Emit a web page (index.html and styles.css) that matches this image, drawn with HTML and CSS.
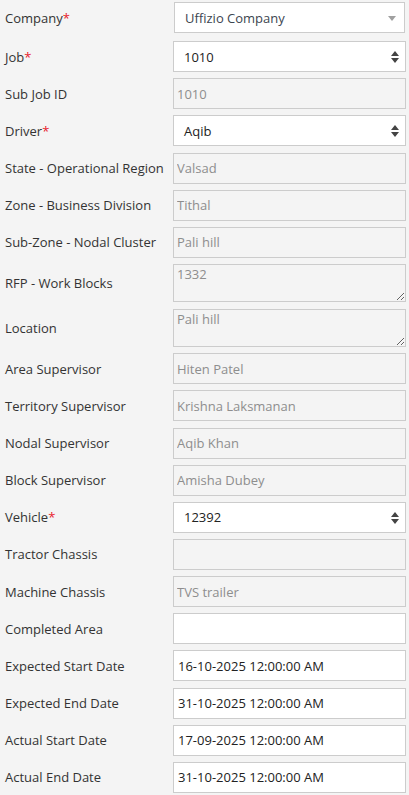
FILE: index.html
```html
<!DOCTYPE html>
<html>
<head>
<meta charset="utf-8">
<link rel="stylesheet" href="styles.css">
</head>
<body>
<form class="form">
  <div class="row row-company">
    <label class="lbl">Company<span class="req">*</span></label>
    <div class="sel sel-company">
      <span class="sel-text">Uffizio Company</span>
      <svg class="arrow-down" width="8" height="5" viewBox="0 0 8 5"><path d="M0 0H8L4 5Z" fill="#a0a0a0"/></svg>
    </div>
  </div>
  <div class="row">
    <label class="lbl">Job<span class="req">*</span></label>
    <div class="sel">
      <span class="sel-text">1010</span>
      <svg class="arrow-ud" width="8" height="12" viewBox="0 0 8 12"><path d="M4 0L8 5H0Z M0 7H8L4 12Z" fill="#444"/></svg>
    </div>
  </div>
  <div class="row">
    <label class="lbl">Sub Job ID</label>
    <input class="inp" disabled value="1010">
  </div>
  <div class="row">
    <label class="lbl">Driver<span class="req">*</span></label>
    <div class="sel">
      <span class="sel-text">Aqib</span>
      <svg class="arrow-ud" width="8" height="12" viewBox="0 0 8 12"><path d="M4 0L8 5H0Z M0 7H8L4 12Z" fill="#444"/></svg>
    </div>
  </div>
  <div class="row">
    <label class="lbl">State - Operational Region</label>
    <input class="inp" disabled value="Valsad">
  </div>
  <div class="row">
    <label class="lbl">Zone - Business Division</label>
    <input class="inp" disabled value="Tithal">
  </div>
  <div class="row">
    <label class="lbl">Sub-Zone - Nodal Cluster</label>
    <input class="inp" disabled value="Pali hill">
  </div>
  <div class="row">
    <label class="lbl">RFP - Work Blocks</label>
    <textarea class="ta" disabled>1332</textarea>
  </div>
  <div class="row">
    <label class="lbl">Location</label>
    <textarea class="ta" disabled>Pali hill</textarea>
  </div>
  <div class="row">
    <label class="lbl">Area Supervisor</label>
    <input class="inp" disabled value="Hiten Patel">
  </div>
  <div class="row">
    <label class="lbl">Territory Supervisor</label>
    <input class="inp" disabled value="Krishna Laksmanan">
  </div>
  <div class="row">
    <label class="lbl">Nodal Supervisor</label>
    <input class="inp" disabled value="Aqib Khan">
  </div>
  <div class="row">
    <label class="lbl">Block Supervisor</label>
    <input class="inp" disabled value="Amisha Dubey">
  </div>
  <div class="row">
    <label class="lbl">Vehicle<span class="req">*</span></label>
    <div class="sel">
      <span class="sel-text">12392</span>
      <svg class="arrow-ud" width="8" height="12" viewBox="0 0 8 12"><path d="M4 0L8 5H0Z M0 7H8L4 12Z" fill="#444"/></svg>
    </div>
  </div>
  <div class="row">
    <label class="lbl">Tractor Chassis</label>
    <input class="inp" disabled value="">
  </div>
  <div class="row">
    <label class="lbl">Machine Chassis</label>
    <input class="inp" disabled value="TVS trailer">
  </div>
  <div class="row">
    <label class="lbl">Completed Area</label>
    <input class="inp inp-on" value="">
  </div>
  <div class="row">
    <label class="lbl">Expected Start Date</label>
    <input class="inp inp-on" value="16-10-2025 12:00:00 AM">
  </div>
  <div class="row">
    <label class="lbl">Expected End Date</label>
    <input class="inp inp-on" value="31-10-2025 12:00:00 AM">
  </div>
  <div class="row">
    <label class="lbl">Actual Start Date</label>
    <input class="inp inp-on" value="17-09-2025 12:00:00 AM">
  </div>
  <div class="row">
    <label class="lbl">Actual End Date</label>
    <input class="inp inp-on" value="31-10-2025 12:00:00 AM">
  </div>
</form>
</body>
</html>
```

FILE: styles.css
```css
html, body {
  margin: 0;
  padding: 0;
  background: #f4f4f4;
}
body {
  font-family: "Open Sans", "Liberation Sans", sans-serif;
  font-size: 13px;
  color: #333;
}
.form {
  display: flex;
  flex-direction: column;
  gap: 6.15px;
  padding: 2px 3px 0 5px;
}
.row {
  display: grid;
  grid-template-columns: 168px 233px;
  align-items: center;
}
.row-company {
  margin-bottom: 2px;
}
.lbl {
  color: #333;
  line-height: 18px;
  white-space: nowrap;
}
.req {
  color: #e8202a;
}
.sel {
  position: relative;
  height: 31px;
  box-sizing: border-box;
  border: 1px solid #ccc;
  background: #fff;
  display: flex;
  align-items: center;
  padding: 0 10px;
  color: #222;
}
.sel-company {
  margin: 0 1px;
  color: #3c4550;
}
.sel-text {
  line-height: 18px;
}
.arrow-down {
  position: absolute;
  right: 8px;
  top: 13px;
}
.arrow-ud {
  position: absolute;
  right: 6px;
  top: 9px;
}
.inp {
  height: 31px;
  box-sizing: border-box;
  width: 233px;
  border: 1px solid #ccc;
  background: #f4f4f4;
  padding: 0 3px;
  font-family: "Open Sans", "Liberation Sans", sans-serif;
  font-size: 13px;
  color: #8e8e8e;
  outline: none;
  margin: 0;
  border-radius: 0;
}
.inp:disabled {
  color: #8e8e8e;
  -webkit-text-fill-color: #8e8e8e;
  opacity: 1;
}
.inp-on {
  background: #fff;
  color: #222;
  padding: 0 4px;
}
.ta {
  height: 38.5px;
  box-sizing: border-box;
  width: 233px;
  border: 1px solid #ccc;
  background: #f4f4f4;
  padding: 0 3px;
  font-family: "Open Sans", "Liberation Sans", sans-serif;
  font-size: 13px;
  line-height: 18px;
  color: #8e8e8e;
  -webkit-text-fill-color: #8e8e8e;
  opacity: 1;
  margin: 0;
  border-radius: 0;
  resize: vertical;
}
```
